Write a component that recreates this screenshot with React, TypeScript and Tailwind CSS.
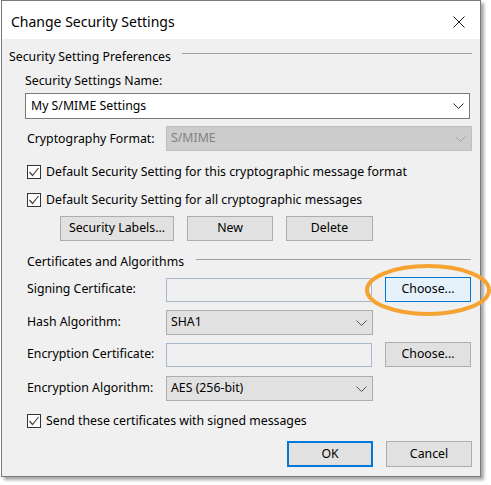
import React from 'react'

const Chevron = ({ color = '#333' }: { color?: string }) => (
  <svg width="11" height="6" viewBox="0 0 11 6" className="shrink-0">
    <polyline points="0.5,0.5 5.5,5.5 10.5,0.5" fill="none" stroke={color} strokeWidth="1" />
  </svg>
)

const Check = ({ label }: { label: string }) => (
  <div className="flex items-center h-[18px] ml-[25px]">
    <div className="w-[14px] h-[14px] border border-[#333] bg-white flex items-center justify-center shrink-0">
      <svg width="12" height="12" viewBox="0 0 12 12">
        <polyline points="1.5,6 4.5,9.5 10.5,2" fill="none" stroke="#444" strokeWidth="1.2" />
      </svg>
    </div>
    <span className="ml-[5px] whitespace-nowrap">{label}</span>
  </div>
)

const Btn = ({ children, w, className = '' }: { children: React.ReactNode; w: string; className?: string }) => (
  <div className={`${w} h-[25px] bg-[#e1e1e1] border border-[#adadad] flex items-center justify-center shrink-0 ${className}`}>
    {children}
  </div>
)

export default function App() {
  return (
    <div
      className="w-[491px] h-[485px] bg-white pl-[1px] relative overflow-hidden text-[12.3px] text-black"
      style={{ fontFamily: '"Noto Sans", "Open Sans", sans-serif' }}
    >
      <div className="w-[480px] h-[477px] border border-[#7a7a7a] bg-[#f0f0f0] shadow-[3px_3px_3px_rgba(0,0,0,0.35)] flex flex-col">
        {/* Title bar */}
        <div className="h-[38px] bg-white flex items-center justify-between pl-[9px] pr-[15px] shrink-0">
          <span className="text-[14px] mt-[3px]">Change Security Settings</span>
          <svg width="12" height="12" viewBox="0 0 12 12" className="mt-[3px]">
            <line x1="0.5" y1="0.5" x2="11.5" y2="11.5" stroke="#222" strokeWidth="1" />
            <line x1="11.5" y1="0.5" x2="0.5" y2="11.5" stroke="#222" strokeWidth="1" />
          </svg>
        </div>

        {/* Security Setting Preferences */}
        <div className="flex h-[18px] items-center ml-[7px] mr-[8px] mt-[9px]">
          <span className="whitespace-nowrap">Security Setting Preferences</span>
          <div className="flex-1 h-px bg-[#a0a0a0] ml-[11px] self-start mt-[5px]" />
        </div>

        <div className="h-[18px] flex items-center ml-[23px] mt-[6px]">Security Settings Name:</div>

        <div className="ml-[23px] mt-[3px] w-[445px] h-[26px] bg-white border border-[#7a7a7a] flex items-center justify-between pl-[5px] pr-[5px]">
          <span>My S/MIME Settings</span>
          <Chevron />
        </div>

        <div className="flex items-center ml-[25px] mt-[7px] h-[25px]">
          <span className="w-[139px] mt-[2px] shrink-0 whitespace-nowrap">Cryptography Format:</span>
          <div className="w-[306px] h-[25px] bg-[#cccccc] border border-[#bfbfbf] flex items-center justify-between pl-[4px] pr-[5px] text-[#838383]">
            <span>S/MIME</span>
            <Chevron color="#a6a6a6" />
          </div>
        </div>

        <div className="mt-[12px]">
          <Check label="Default Security Setting for this cryptographic message format" />
        </div>
        <div className="mt-[10px]">
          <Check label="Default Security Setting for all cryptographic messages" />
        </div>

        <div className="flex ml-[58px] mt-[7px] gap-[13px]">
          <Btn w="w-[114px]">Security Labels...</Btn>
          <Btn w="w-[86px]">New</Btn>
          <Btn w="w-[87px]">Delete</Btn>
        </div>

        {/* Certificates and Algorithms */}
        <div className="flex h-[18px] items-center ml-[25px] mr-[9px] mt-[12px]">
          <span className="whitespace-nowrap">Certificates and Algorithms</span>
          <div className="flex-1 h-px bg-[#a0a0a0] ml-[12px] self-start mt-[6px]" />
        </div>

        <div className="flex items-center ml-[25px] mt-[6px] h-[25px]">
          <span className="w-[139px] shrink-0">Signing Certificate:</span>
          <div className="w-[206px] h-[24px] border border-[#a9b8cc] bg-[#f0f0f0]" />
          <Btn w="w-[86px]" className="ml-[13px] !bg-[#e5f1fb] !border-[#0078d7]">Choose...</Btn>
        </div>

        <div className="flex items-center ml-[25px] mt-[8px] h-[25px]">
          <span className="w-[139px] shrink-0">Hash Algorithm:</span>
          <div className="w-[207px] h-[25px] bg-[#e1e1e1] border border-[#adadad] flex items-center justify-between pl-[4px] pr-[5px]">
            <span>SHA1</span>
            <Chevron color="#555" />
          </div>
        </div>

        <div className="flex items-center ml-[25px] mt-[7px] h-[25px]">
          <span className="w-[139px] shrink-0">Encryption Certificate:</span>
          <div className="w-[206px] h-[24px] border border-[#a9b8cc] bg-[#f0f0f0]" />
          <Btn w="w-[86px]" className="ml-[13px]">Choose...</Btn>
        </div>

        <div className="flex items-center ml-[25px] mt-[9px] h-[25px]">
          <span className="w-[139px] shrink-0">Encryption Algorithm:</span>
          <div className="w-[207px] h-[25px] bg-[#e1e1e1] border border-[#adadad] flex items-center justify-between pl-[4px] pr-[5px]">
            <span>AES (256-bit)</span>
            <Chevron color="#555" />
          </div>
        </div>

        <div className="mt-[11px]">
          <Check label="Send these certificates with signed messages" />
        </div>

        <div className="flex justify-end mr-[8px] mt-[11px] gap-[13px]">
          <div className="w-[86px] h-[26px] bg-[#e1e1e1] border-2 border-[#0078d7] flex items-center justify-center">OK</div>
          <Btn w="w-[86px] !h-[26px]">Cancel</Btn>
        </div>
      </div>

      {/* Orange highlight ellipse */}
      <svg className="absolute left-[364px] top-[263px]" width="127" height="54" viewBox="0 0 127 54">
        <ellipse cx="64" cy="27" rx="61" ry="24" fill="none" stroke="#f5a331" strokeWidth="4" />
      </svg>
    </div>
  )
}
